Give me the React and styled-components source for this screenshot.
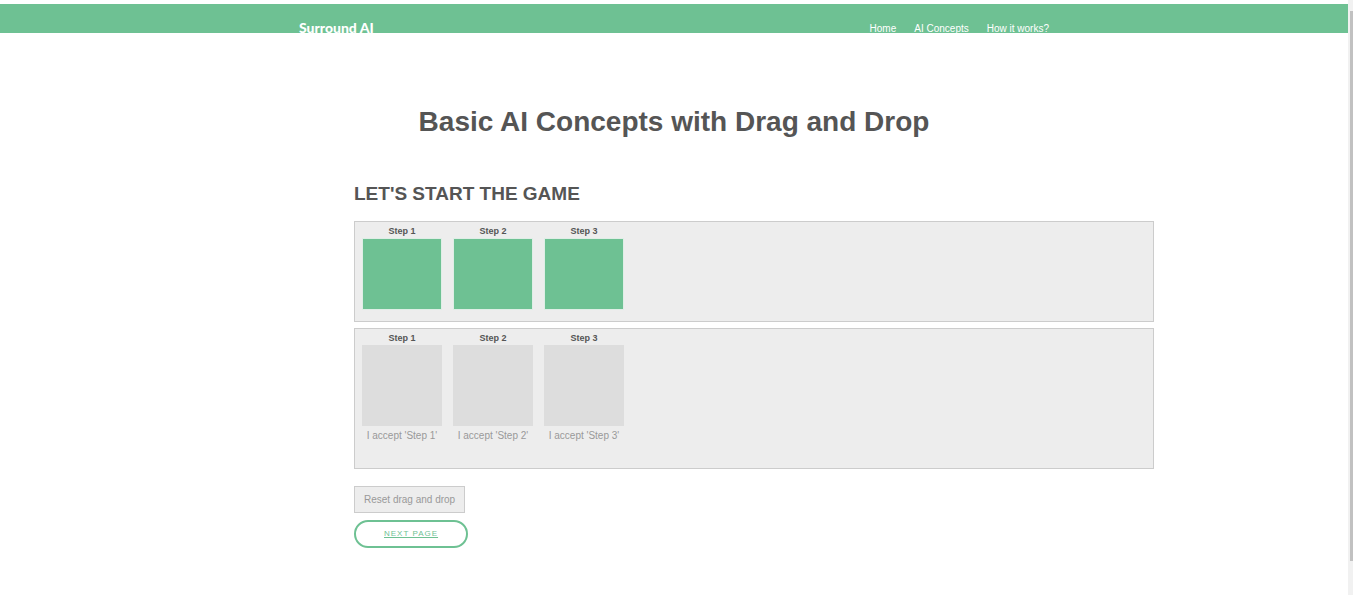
import React from "react";
import styled, { createGlobalStyle } from "styled-components";

const GlobalStyle = createGlobalStyle`
  *, *::before, *::after { box-sizing: border-box; }
  body {
    margin: 0;
    background: #fff;
    color: #555;
    font-family: "Liberation Sans", Arial, sans-serif;
    font-size: 10px;
    line-height: 16px;
  }
  h1, h2, h3, p { margin: 0; }
`;

const Shell = styled.div`
  display: flex;
  min-height: 100vh;
`;

const Page = styled.div`
  flex: 1;
  min-width: 0;
  padding-top: 4px;
`;

const Header = styled.header`
  height: 29px;
  overflow: hidden;
  background: #6ec193;
`;

const HeaderInner = styled.div`
  display: flex;
  justify-content: space-between;
  max-width: 750px;
  margin: 0 auto;
  padding-top: 16px;
`;

const Brand = styled.a`
  color: #fff;
  font-family: Lato, sans-serif;
  font-size: 14px;
  font-weight: 900;
  text-decoration: none;
`;

const Nav = styled.nav`
  display: flex;
  gap: 18px;
  padding-top: 1px;
`;

const NavLink = styled.a`
  color: #fff;
  text-decoration: none;
`;

const Title = styled.h1`
  padding-top: 73px;
  font-size: 28px;
  line-height: 32px;
  text-align: center;
`;

const Game = styled.main`
  width: 100%;
  max-width: 640px;
  margin: 40px auto 0;
`;

const GameTitle = styled.h2`
  font-size: 19px;
  line-height: 32px;
  margin-bottom: 11px;
`;

const Panel = styled.section`
  display: flex;
  gap: 11px;
  width: 125%;
  min-height: ${(p) => (p.$tall ? 141 : 101)}px;
  margin-bottom: 6px;
  padding: 0 7px;
  border: 1px solid #ccc;
  background: #ededed;
`;

const Step = styled.div`
  width: 80px;
  text-align: center;
`;

const StepName = styled.h3`
  font-size: 9px;
  line-height: 16px;
  padding-top: 1px;
  height: 16px;
`;

const Tile = styled.div`
  height: 72px;
  border: 1px solid #dfeee6;
  background: #6ec193;
`;

const Slot = styled.div`
  height: 81px;
  background: #ddd;
`;

const Hint = styled.p`
  margin-top: 2px;
  color: #999;
`;

const Actions = styled.div`
  display: flex;
  flex-direction: column;
  align-items: flex-start;
  gap: 7px;
  margin-top: 17px;
  padding-bottom: 24px;
`;

const ResetButton = styled.button`
  height: 27px;
  padding: 0 9px;
  border: 1px solid #ccc;
  background: #ededed;
  color: #999;
  font: inherit;
`;

const NextLink = styled.a`
  padding: 4px 28px;
  border: 2px solid #6ec193;
  border-radius: 14px;
  color: #6ec193;
  font-size: 8px;
  letter-spacing: 1px;
`;

const ScrollTrack = styled.div`
  position: sticky;
  top: 0;
  flex: none;
  width: 5px;
  height: 100vh;
  padding: 11px 0 34px 2px;
  background: #f1f1f1;
`;

const ScrollThumb = styled.div`
  height: 100%;
  background: #c1c1c1;
`;

const steps = [1, 2, 3];

export default function App() {
  return (
    <>
      <GlobalStyle />
      <Shell>
        <Page>
          <Header>
            <HeaderInner>
              <Brand href="#">Surround AI</Brand>
              <Nav>
                <NavLink href="#">Home</NavLink>
                <NavLink href="#">AI Concepts</NavLink>
                <NavLink href="#">How it works?</NavLink>
              </Nav>
            </HeaderInner>
          </Header>
          <Title>Basic AI Concepts with Drag and Drop</Title>
          <Game>
            <GameTitle>LET'S START THE GAME</GameTitle>
            <Panel>
              {steps.map((n) => (
                <Step key={n}>
                  <StepName>Step {n}</StepName>
                  <Tile draggable />
                </Step>
              ))}
            </Panel>
            <Panel $tall>
              {steps.map((n) => (
                <Step key={n}>
                  <StepName>Step {n}</StepName>
                  <Slot />
                  <Hint>I accept 'Step {n}'</Hint>
                </Step>
              ))}
            </Panel>
            <Actions>
              <ResetButton type="button">Reset drag and drop</ResetButton>
              <NextLink href="#">NEXT PAGE</NextLink>
            </Actions>
          </Game>
        </Page>
        <ScrollTrack>
          <ScrollThumb />
        </ScrollTrack>
      </Shell>
    </>
  );
}
